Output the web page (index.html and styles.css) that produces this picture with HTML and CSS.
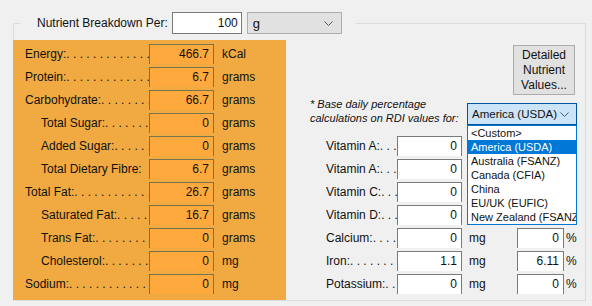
FILE: index.html
```html
<!DOCTYPE html>
<html lang="en">
<head>
    <meta charset="UTF-8">
    <meta name="viewport" content="width=device-width, initial-scale=1.0">
    <title>Nutrient Breakdown</title>
    <link rel="stylesheet" href="styles.css">
</head>
<body>
    <fieldset class="group">
        <legend class="per">
            <span class="per-label">Nutrient Breakdown Per:</span>
            <span class="per-amount">100</span>
            <span class="combo per-unit">g
                <svg class="chev" width="9" height="5" viewBox="0 0 9 5"><path d="M0.5 0.5 L4.5 4.5 L8.5 0.5" fill="none" stroke="#555"/></svg>
            </span>
        </legend>
        <div class="group-body">
            <!-- main nutrients, orange block -->
            <div class="panel">
                <div class="row"><span class="lbl"><span>Energy:</span></span><span class="field orange">466.7</span><span class="unit">kCal</span></div>
                <div class="row"><span class="lbl"><span>Protein:</span></span><span class="field orange">6.7</span><span class="unit">grams</span></div>
                <div class="row"><span class="lbl"><span>Carbohydrate: </span></span><span class="field orange">66.7</span><span class="unit">grams</span></div>
                <div class="row"><span class="lbl sub"><span>Total Sugar: </span></span><span class="field orange">0</span><span class="unit">grams</span></div>
                <div class="row"><span class="lbl sub"><span>Added Sugar: </span></span><span class="field orange">0</span><span class="unit">grams</span></div>
                <div class="row"><span class="lbl sub nodots"><span>Total Dietary Fibre:</span></span><span class="field orange">6.7</span><span class="unit">grams</span></div>
                <div class="row"><span class="lbl"><span>Total Fat:</span></span><span class="field orange">26.7</span><span class="unit">grams</span></div>
                <div class="row"><span class="lbl sub"><span>Saturated Fat:</span></span><span class="field orange">16.7</span><span class="unit">grams</span></div>
                <div class="row"><span class="lbl sub"><span>Trans Fat:</span></span><span class="field orange">0</span><span class="unit">grams</span></div>
                <div class="row"><span class="lbl sub"><span>Cholesterol:</span></span><span class="field orange">0</span><span class="unit">mg</span></div>
                <div class="row"><span class="lbl"><span>Sodium:</span></span><span class="field orange">0</span><span class="unit">mg</span></div>
            </div>

            <div class="side">
                <div class="side-top">
                    <button class="detail-btn">Detailed<br>Nutrient<br>Values...</button>
                </div>
                <div class="rdi">
                    <p class="rdi-note">* Base daily percentage<br>calculations on RDI values for:</p>
                    <div class="combo rdi-select"><span>America (USDA)</span>
                        <svg class="chev" width="9" height="5" viewBox="0 0 9 5"><path d="M0.5 0.5 L4.5 4.5 L8.5 0.5" fill="none" stroke="#555"/></svg>
                        <ul class="rdi-list">
                            <li>&lt;Custom&gt;</li>
                            <li class="sel">America (USDA)</li>
                            <li>Australia (FSANZ)</li>
                            <li>Canada (CFIA)</li>
                            <li>China</li>
                            <li>EU/UK (EUFIC)</li>
                            <li>New Zealand (FSANZ)</li>
                        </ul>
                    </div>
                </div>
                <!-- first four rows: unit and % boxes sit under the open list -->
                <div class="vits">
                    <div class="vrow"><span class="lbl"><span>Vitamin A: </span></span><span class="field white">0</span></div>
                    <div class="vrow"><span class="lbl"><span>Vitamin A: </span></span><span class="field white">0</span></div>
                    <div class="vrow"><span class="lbl"><span>Vitamin C: </span></span><span class="field white">0</span></div>
                    <div class="vrow"><span class="lbl"><span>Vitamin D:</span></span><span class="field white">0</span></div>
                    <div class="vrow"><span class="lbl"><span>Calcium: </span></span><span class="field white">0</span><span class="vunit">mg</span><span class="field white pct">0</span><span class="pct-sign">%</span></div>
                    <div class="vrow"><span class="lbl"><span>Iron: </span></span><span class="field white">1.1</span><span class="vunit">mg</span><span class="field white pct">6.11</span><span class="pct-sign">%</span></div>
                    <div class="vrow"><span class="lbl"><span>Potassium:</span></span><span class="field white">0</span><span class="vunit">mg</span><span class="field white pct">0</span><span class="pct-sign">%</span></div>
                </div>
            </div>
        </div>
    </fieldset>
</body>
</html>
```

FILE: styles.css
```css
body{
    margin: 0;
    background-color: #f0f0f0;
    color: #111;
    font-family: "Liberation Sans", Arial, sans-serif;
    font-size: 12px;
}
.group{
    margin: 12px 0 0 13px;
    width: 573px;
    box-sizing: border-box;
    border: 1px solid #dcdcdc;
    padding: 6px 0 0 0;
    min-width: 0;
}
.per{
    display: flex;
    align-items: center;
    margin-left: 6px;
    padding: 0 14px 0 17px;
}
.per > *{
    flex-shrink: 0;
}
.per-amount{
    width: 70px;
    height: 22px;
    box-sizing: border-box;
    margin-left: 4px;
    padding-right: 3px;
    border: 1px solid #7a7a7a;
    background-color: white;
    text-align: right;
    line-height: 20px;
}
.combo{
    display: flex;
    align-items: center;
    justify-content: space-between;
    box-sizing: border-box;
    height: 22px;
    white-space: nowrap;
}
.per-unit{
    width: 95px;
    margin-left: 5px;
    padding: 0 8px 0 5px;
    background-color: #e1e1e1;
    border: 1px solid #adadad;
    font-size: 13px;
}
.group-body{
    display: flex;
}

/* orange block */
.panel{
    flex-shrink: 0;
    margin-left: -1px;
    width: 273px;
    box-sizing: border-box;
    padding: 4px 0 6px 12px;
    background-color: #f0aa41;
    display: flex;
    flex-direction: column;
    gap: 3px;
}
.row, .vrow{
    display: flex;
    align-items: center;
    height: 20px;
}
.lbl{
    display: flex;
    flex-shrink: 0;
    width: 124px;
    box-sizing: border-box;
    white-space: nowrap;
    overflow: hidden;
}
.lbl span{
    flex-shrink: 0;
}
.lbl::after{
    content: ". . . . . . . . . . . . . . . . . . . . . . . . . . . . . .";
    flex: 1 1 0;
    min-width: 0;
    overflow: hidden;
}
.lbl.sub{
    padding-left: 16px;
}
.lbl.nodots::after{
    content: "";
}
.field{
    display: block;
    flex-shrink: 0;
    width: 65px;
    height: 20px;
    box-sizing: border-box;
    border: 1px solid #7a7a7a;
    border-bottom: none;
    padding-right: 4px;
    text-align: right;
    line-height: 19px;
}
.field.orange{
    background-color: #fea93d;
    border-color: #77734a;
}
.field.white{
    background-color: white;
}
.unit{
    margin-left: 8px;
}

/* right column */
.side{
    flex: 1;
    min-width: 0;
    display: flex;
    flex-direction: column;
}
.side-top{
    display: flex;
    justify-content: flex-end;
    padding: 5px 10px 0 0;
}
.detail-btn{
    width: 62px;
    height: 50px;
    padding: 0;
    background-color: #e1e1e1;
    border: 1px solid #adadad;
    font-family: inherit;
    font-size: 12px;
    line-height: 15px;
    color: #111;
}
.rdi{
    display: flex;
    align-items: flex-start;
    margin-top: 2px;
    padding: 0 8px 0 24px;
}
.rdi-note{
    margin: 0;
    font-size: 11px;
    font-style: italic;
    line-height: 14px;
    white-space: nowrap;
}
.rdi-select{
    position: relative;
    margin: 6px 0 0 auto;
    width: 110px;
    flex-shrink: 0;
    padding: 0 7px 0 4px;
    background-color: #cce4f7;
    border: 1px solid #005499;
    font-size: 11.5px;
}
.rdi-list{
    position: absolute;
    top: 21px;
    left: -1px;
    z-index: 2;
    width: 110px;
    box-sizing: border-box;
    margin: 0;
    padding: 0;
    list-style: none;
    background-color: white;
    border: 1px solid #0078d7;
    font-size: 11px;
}
.rdi-list li{
    height: 14px;
    line-height: 14px;
    padding-left: 3px;
    white-space: nowrap;
    overflow: hidden;
}
.rdi-list .sel{
    background-color: #0078d7;
    color: white;
}
.vits{
    margin-top: 11px;
    padding-left: 40px;
    display: flex;
    flex-direction: column;
    gap: 3px;
}
.vrow .lbl{
    width: 71px;
}
.vunit{
    width: 48px;
    margin-left: 7px;
}
.pct{
    width: 47px;
}
.pct-sign{
    margin-left: 2px;
}
```
